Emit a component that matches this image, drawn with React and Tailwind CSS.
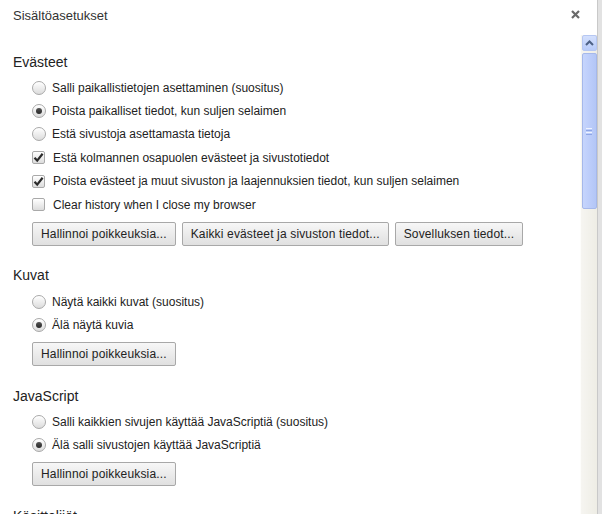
import React from "react";

const font = { fontFamily: '"Liberation Sans", Arial, sans-serif' };

function Radio({ checked, label }) {
  return (
    <div className="h-[23.4px] flex items-center">
      <span className="w-[14px] h-[14px] rounded-full border border-[#a9a9a9] bg-gradient-to-b from-[#ffffff] to-[#dcdcdc] flex items-center justify-center shadow-[inset_0_1px_0_#fff]">
        {checked && (
          <span className="w-[6px] h-[6px] rounded-full bg-gradient-to-b from-[#555] to-[#2a2a2a]" />
        )}
      </span>
      <span className="ml-[6px] text-[12px] text-[#222]">{label}</span>
    </div>
  );
}

function Check({ checked, label }) {
  return (
    <div className="h-[23.4px] flex items-center">
      <span className="w-[13px] h-[13px] rounded-[2px] border border-[#a9a9a9] bg-gradient-to-b from-[#ffffff] to-[#dcdcdc] flex items-center justify-center">
        {checked && (
          <svg width="11" height="11" viewBox="0 0 11 11">
            <path d="M1.5 5.8 L4.2 8.6 L9.6 1.8" fill="none" stroke="#2b2b2b" strokeWidth="2.2" />
          </svg>
        )}
      </span>
      <span className="ml-[8px] text-[12px] text-[#222]">{label}</span>
    </div>
  );
}

function Btn({ children }) {
  return (
    <button className="h-[24px] px-[8px] border border-[#a8a8a8] rounded-[2px] bg-gradient-to-b from-[#f7f7f7] to-[#e0e0e0] text-[12px] tracking-[0.15px] text-[#222] leading-none">
      {children}
    </button>
  );
}

function Section({ title, first, children, buttons }) {
  return (
    <div className={first ? "" : "mt-[16px]"}>
      <div className="h-[28px] flex items-center pl-[13px] text-[14px] text-[#222]">{title}</div>
      <div className="pl-[32px]">
        {children}
        {buttons && <div className="flex gap-[6px] mt-[5.5px]">{buttons}</div>}
      </div>
    </div>
  );
}

export default function App() {
  return (
    <div className="w-[602px] h-[514px] flex overflow-hidden bg-white" style={font}>
      <div className="flex-1 flex flex-col min-w-0">
        <div className="h-[35px] shrink-0 flex items-start justify-between pl-[13px] pr-[17px]">
          <span className="text-[13px] text-[#333] mt-[6px]">Sisältöasetukset</span>
          <svg width="9" height="9" viewBox="0 0 9 9" className="mt-[10px]">
            <path d="M1 1 L8 8 M8 1 L1 8" stroke="#6a6a6a" strokeWidth="2.2" />
          </svg>
        </div>
        <div className="flex-1 flex min-h-0">
          <div className="flex-1 overflow-hidden pt-[13px]">
            <Section
              first
              title="Evästeet"
              buttons={
                <>
                  <Btn>Hallinnoi poikkeuksia...</Btn>
                  <Btn>Kaikki evästeet ja sivuston tiedot...</Btn>
                  <Btn>Sovelluksen tiedot...</Btn>
                </>
              }
            >
              <Radio label="Salli paikallistietojen asettaminen (suositus)" />
              <Radio checked label="Poista paikalliset tiedot, kun suljen selaimen" />
              <Radio label="Estä sivustoja asettamasta tietoja" />
              <Check checked label="Estä kolmannen osapuolen evästeet ja sivustotiedot" />
              <Check checked label="Poista evästeet ja muut sivuston ja laajennuksien tiedot, kun suljen selaimen" />
              <Check label="Clear history when I close my browser" />
            </Section>
            <Section title="Kuvat" buttons={<Btn>Hallinnoi poikkeuksia...</Btn>}>
              <Radio label="Näytä kaikki kuvat (suositus)" />
              <Radio checked label="Älä näytä kuvia" />
            </Section>
            <Section title="JavaScript" buttons={<Btn>Hallinnoi poikkeuksia...</Btn>}>
              <Radio label="Salli kaikkien sivujen käyttää JavaScriptiä (suositus)" />
              <Radio checked label="Älä salli sivustojen käyttää JavaScriptiä" />
            </Section>
            <Section title="Käsittelijät">
              <Radio label="Salli sivustojen pyytää" />
            </Section>
          </div>
          <div className="w-[17px] shrink-0 bg-gradient-to-r from-[#f6f5f1] to-[#eeede5] border-l border-[#fdfdfb] flex flex-col items-center">
            <div className="w-[15px] h-[16px] rounded-[2px] border border-[#b6c7f2] bg-gradient-to-b from-[#d4e0fd] to-[#b8cbf9] flex items-center justify-center">
              <svg width="9" height="6" viewBox="0 0 9 6">
                <path d="M1 5 L4.5 1.5 L8 5" fill="none" stroke="#4d6185" strokeWidth="2" />
              </svg>
            </div>
            <div className="mt-[2px] w-[15px] h-[156px] rounded-[2px] border border-[#a5b8ea] bg-gradient-to-r from-[#c6d5fc] via-[#bccdfa] to-[#b3c6f6] flex flex-col items-center justify-center gap-[1px]">
              <span className="w-[6px] h-[1px] bg-[#eef3ff]" />
              <span className="w-[6px] h-[1px] bg-[#8ea6e6]" />
              <span className="w-[6px] h-[1px] bg-[#eef3ff]" />
              <span className="w-[6px] h-[1px] bg-[#8ea6e6]" />
            </div>
          </div>
        </div>
      </div>
      <div className="w-[5px] shrink-0 border-l border-[#c9c9c9] bg-[#e2e2e2]" />
    </div>
  );
}
